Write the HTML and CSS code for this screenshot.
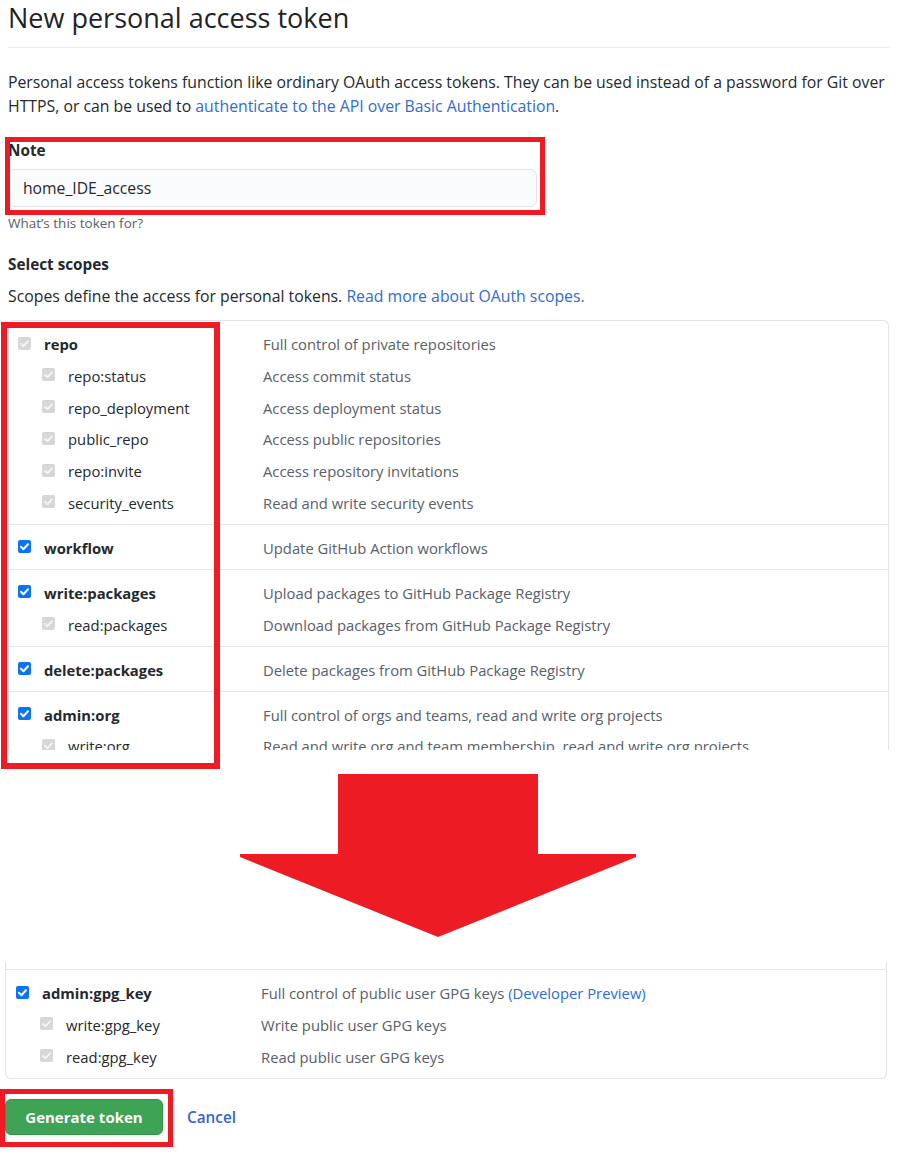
FILE: index.html
```html
<!DOCTYPE html>
<html>
<head>
<meta charset="utf-8">
<link rel="stylesheet" href="styles.css">
</head>
<body>
<div class="page">
  <h1 class="title">New personal access token</h1>
  <p class="intro">Personal access tokens function like ordinary OAuth access tokens. They can be used instead of a password for Git over HTTPS, or can be used to <a href="#">authenticate to the API over Basic Authentication</a>.</p>

  <div class="note">
    <div class="note-label">Note</div>
    <div class="note-input">home_IDE_access</div>
    <span class="mark mark-note"></span>
  </div>
  <div class="hint">What’s this token for?</div>

  <div class="scopes-title">Select scopes</div>
  <p class="scopes-desc">Scopes define the access for personal tokens. <a href="#">Read more about OAuth scopes.</a></p>

  <div class="scope-wrap">
    <div class="scope-box top">
      <div class="group">
        <div class="row parent"><span class="cb dis"><svg viewBox="0 0 13 13"><path d="M3 6.8l2.4 2.4L10 4.3" /></svg></span><span class="name">repo</span><span class="desc">Full control of private repositories</span></div>
        <div class="row child"><span class="cb dis"><svg viewBox="0 0 13 13"><path d="M3 6.8l2.4 2.4L10 4.3" /></svg></span><span class="name">repo:status</span><span class="desc">Access commit status</span></div>
        <div class="row child"><span class="cb dis"><svg viewBox="0 0 13 13"><path d="M3 6.8l2.4 2.4L10 4.3" /></svg></span><span class="name">repo_deployment</span><span class="desc">Access deployment status</span></div>
        <div class="row child"><span class="cb dis"><svg viewBox="0 0 13 13"><path d="M3 6.8l2.4 2.4L10 4.3" /></svg></span><span class="name">public_repo</span><span class="desc">Access public repositories</span></div>
        <div class="row child"><span class="cb dis"><svg viewBox="0 0 13 13"><path d="M3 6.8l2.4 2.4L10 4.3" /></svg></span><span class="name">repo:invite</span><span class="desc">Access repository invitations</span></div>
        <div class="row child"><span class="cb dis"><svg viewBox="0 0 13 13"><path d="M3 6.8l2.4 2.4L10 4.3" /></svg></span><span class="name">security_events</span><span class="desc">Read and write security events</span></div>
      </div>
      <div class="group">
        <div class="row parent"><span class="cb on"><svg viewBox="0 0 13 13"><path d="M3 6.8l2.4 2.4L10 4.3" /></svg></span><span class="name">workflow</span><span class="desc">Update GitHub Action workflows</span></div>
      </div>
      <div class="group">
        <div class="row parent"><span class="cb on"><svg viewBox="0 0 13 13"><path d="M3 6.8l2.4 2.4L10 4.3" /></svg></span><span class="name">write:packages</span><span class="desc">Upload packages to GitHub Package Registry</span></div>
        <div class="row child"><span class="cb dis"><svg viewBox="0 0 13 13"><path d="M3 6.8l2.4 2.4L10 4.3" /></svg></span><span class="name">read:packages</span><span class="desc">Download packages from GitHub Package Registry</span></div>
      </div>
      <div class="group">
        <div class="row parent"><span class="cb on"><svg viewBox="0 0 13 13"><path d="M3 6.8l2.4 2.4L10 4.3" /></svg></span><span class="name">delete:packages</span><span class="desc">Delete packages from GitHub Package Registry</span></div>
      </div>
      <div class="group">
        <div class="row parent"><span class="cb on"><svg viewBox="0 0 13 13"><path d="M3 6.8l2.4 2.4L10 4.3" /></svg></span><span class="name">admin:org</span><span class="desc">Full control of orgs and teams, read and write org projects</span></div>
        <div class="row child"><span class="cb dis"><svg viewBox="0 0 13 13"><path d="M3 6.8l2.4 2.4L10 4.3" /></svg></span><span class="name">write:org</span><span class="desc">Read and write org and team membership, read and write org projects</span></div>
        <div class="row child"><span class="cb dis"><svg viewBox="0 0 13 13"><path d="M3 6.8l2.4 2.4L10 4.3" /></svg></span><span class="name">read:org</span><span class="desc">Read org and team membership, read org projects</span></div>
      </div>
    </div>
    <span class="mark mark-scopes"></span>
  </div>

  <div class="arrow">
    <svg width="396" height="164" viewBox="0 0 396 164"><polygon points="98,0 298,0 298,80 396,80 396,83 198,163 0,83 0,80 98,80" fill="#ed1c24"/></svg>
  </div>

  <div class="scope-box bottom">
    <div class="group">
      <div class="row parent"><span class="cb on"><svg viewBox="0 0 13 13"><path d="M3 6.8l2.4 2.4L10 4.3" /></svg></span><span class="name">admin:gpg_key</span><span class="desc">Full control of public user GPG keys <a href="#">(Developer Preview)</a></span></div>
      <div class="row child"><span class="cb dis"><svg viewBox="0 0 13 13"><path d="M3 6.8l2.4 2.4L10 4.3" /></svg></span><span class="name">write:gpg_key</span><span class="desc">Write public user GPG keys</span></div>
      <div class="row child"><span class="cb dis"><svg viewBox="0 0 13 13"><path d="M3 6.8l2.4 2.4L10 4.3" /></svg></span><span class="name">read:gpg_key</span><span class="desc">Read public user GPG keys</span></div>
    </div>
  </div>

  <div class="actions">
    <div class="btn-wrap">
      <button class="btn-primary">Generate token</button>
      <span class="mark mark-btn"></span>
    </div>
    <a href="#" class="cancel">Cancel</a>
  </div>
</div>
</body>
</html>
```

FILE: styles.css
```css
html, body {
  margin: 0;
  padding: 0;
  background: #fff;
}
body {
  font-family: "Open Sans", "Noto Sans", sans-serif;
  font-size: 15px;
  color: #24292e;
}
a {
  color: #2f6bd6;
  text-decoration: none;
}
.page {
  padding: 0 28px 40px 8px;
}
.title {
  margin: 0;
  font-size: 27px;
  font-weight: 400;
  line-height: 36px;
  padding-bottom: 11px;
  border-bottom: 1px solid #e8eaed;
  color: #1f2328;
}
.intro {
  margin: 22px 0 0;
  font-size: 15.8px;
  line-height: 24px;
}
.note {
  position: relative;
  margin-top: 20px;
}
.note-label {
  font-weight: 700;
  font-size: 15.3px;
  line-height: 24px;
}
.note-input {
  margin-top: 7px;
  width: 513px;
  height: 36px;
  line-height: 36px;
  padding-left: 14px;
  font-size: 15.7px;
  background: #fafbfc;
  border: 1px solid #e1e4e8;
  border-radius: 6px;
}
.hint {
  margin-top: 7px;
  font-size: 13.5px;
  line-height: 18px;
  color: #586069;
}
.mark {
  position: absolute;
  border: 5px solid #ed1c24;
  pointer-events: none;
}
.mark-note {
  left: -3px;
  top: -1px;
  width: 530px;
  height: 68px;
}
.scopes-title {
  margin-top: 20px;
  font-weight: 700;
  font-size: 15.3px;
  line-height: 24px;
}
.scopes-desc {
  margin: 8px 0 0;
  font-size: 15.8px;
  line-height: 24px;
}
.scope-wrap {
  position: relative;
  margin-top: 12px;
}
.mark-scopes {
  left: -7px;
  top: 2px;
  width: 207px;
  height: 435px;
  border-width: 6px;
}
.scope-box {
  border: 1px solid #e1e4e8;
  border-radius: 6px;
}
.scope-box.top {
  height: 429px;
  overflow: hidden;
  border-bottom: none;
  border-bottom-left-radius: 0;
  border-bottom-right-radius: 0;
}
.group {
  padding: 11px 0 9px 9px;
  display: flex;
  flex-direction: column;
  gap: 7.75px;
}
.group + .group {
  border-top: 1px solid #e1e4e8;
}
.row {
  display: grid;
  grid-template-columns: 13px 232px 1fr;
  align-items: center;
  line-height: 24px;
  font-size: 14.8px;
}
.row .name {
  padding-left: 13px;
  color: #24292e;
}
.row.parent .name {
  font-weight: 700;
}
.row.child .cb {
  margin-left: 24px;
}
.row.child .name {
  padding-left: 37px;
}
.desc {
  color: #586069;
}
.cb {
  display: block;
  width: 13px;
  height: 13px;
  border-radius: 2px;
  margin-top: -2px;
}
.cb svg {
  display: block;
  width: 13px;
  height: 13px;
}
.cb path {
  fill: none;
  stroke: #fff;
  stroke-width: 2;
  stroke-linecap: round;
  stroke-linejoin: round;
}
.cb.on {
  background: #0b74f5;
}
.cb.dis {
  background: #d7d7d7;
}
.cb.dis path {
  stroke: #f2f2f2;
}
.arrow {
  margin: 24px 0 0 232px;
  height: 164px;
}
.arrow svg {
  display: block;
}
.scope-box.bottom {
  margin: 24px 0 0 -3px;
  width: 880px;
  border-top: none;
  border-top-left-radius: 0;
  border-top-right-radius: 0;
  padding-top: 7px;
}
.scope-box.bottom .group {
  border-top: 1px solid #e1e4e8;
  padding-left: 10px;
}
.actions {
  margin-top: 20px;
  display: flex;
  align-items: center;
  gap: 24px;
  margin-left: -3px;
}
.btn-wrap {
  position: relative;
}
.btn-primary {
  display: block;
  width: 158px;
  height: 36px;
  background: #3ea354;
  color: #fff;
  font-family: "Open Sans", "Noto Sans", sans-serif;
  font-size: 15px;
  font-weight: 700;
  border: 1px solid #379249;
  border-radius: 6px;
  padding: 0;
}
.mark-btn {
  left: -5px;
  top: -10px;
  width: 163px;
  height: 48px;
}
.cancel {
  font-weight: 600;
  font-size: 15.3px;
  color: #3565d4;
}
```
